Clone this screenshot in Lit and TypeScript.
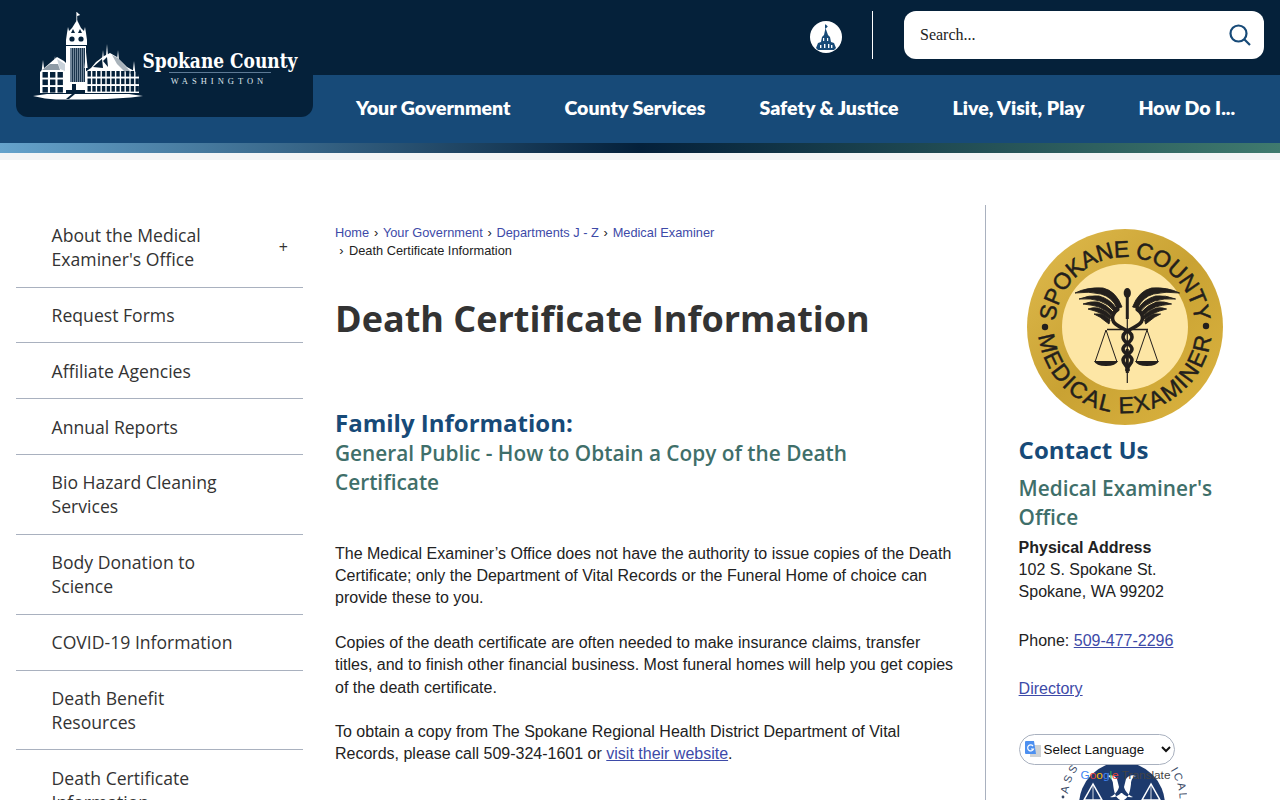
import { LitElement, css, html, svg } from 'lit';
import { customElement } from 'lit/decorators.js';

const NAV = ['Your Government', 'County Services', 'Safety & Justice', 'Live, Visit, Play', 'How Do I...'];

const SIDE = [
  { label: "About the Medical Examiner's Office", plus: true },
  { label: 'Request Forms' },
  { label: 'Affiliate Agencies' },
  { label: 'Annual Reports' },
  { label: 'Bio Hazard Cleaning Services' },
  { label: 'Body Donation to Science' },
  { label: 'COVID-19 Information' },
  { label: 'Death Benefit Resources' },
  { label: 'Death Certificate Information' },
];

// left wing of the caduceus, mirrored for the right one
const FEATHERS = [
  'M-3 -20Q-9 -36 -22 -39Q-38 -40 -50 -34Q-36 -36 -24 -33Q-13 -30 -8 -19z',
  'M-9 -19Q-15 -28 -26 -31Q-36 -32 -46 -28Q-34 -29 -25 -26Q-16 -23 -11 -16z',
  'M-12 -15Q-18 -22 -27 -25Q-34 -26 -42 -23Q-32 -22 -26 -20Q-19 -17 -14 -12z',
  'M-14 -11Q-20 -17 -27 -19Q-32 -20 -37 -18Q-29 -16 -25 -14Q-19 -11 -15 -8z',
  'M-15 -7Q-20 -12 -25 -13L-31 -13Q-24 -10 -20 -6L-16 -3z',
];

function windows(x0: number, y0: number, cols: number, rows: number, dx: number, dy: number, w: number, h: number) {
  const out = [];
  for (let c = 0; c < cols; c++) {
    for (let r = 0; r < rows; r++) {
      out.push(svg`<rect x=${x0 + c * dx} y=${y0 + r * dy} width=${w} height=${h} fill="#05213a" />`);
    }
  }
  return out;
}

@customElement('app-root')
export class AppRoot extends LitElement {
  static styles = css`
    :host {
      display: block;
      height: 800px;
      overflow: hidden;
      background: #fff;
      font-family: 'Liberation Sans', Arial, sans-serif;
      color: #222;
    }
    a {
      color: #3d4aa8;
    }
    .top {
      display: flex;
      align-items: center;
      justify-content: flex-end;
      height: 75px;
      background: #05213a;
      padding: 0 16px 5px 0;
      box-sizing: border-box;
    }
    .round {
      width: 32px;
      height: 32px;
      margin-top: 4px;
      border-radius: 50%;
      background: #fff;
      display: block;
    }
    .divider {
      width: 1px;
      height: 48px;
      background: #fff;
      margin: 0 31px 0 30px;
    }
    .search {
      width: 360px;
      height: 48px;
      background: #fff;
      border-radius: 12px;
      display: flex;
      align-items: center;
      padding: 0 12px 0 16px;
      box-sizing: border-box;
    }
    .search input {
      flex: 1;
      border: 0;
      outline: 0;
      min-width: 0;
      padding: 0;
      font: 16px 'Liberation Serif', 'Times New Roman', serif;
      color: #222;
    }
    .search input::placeholder {
      color: #222;
      opacity: 1;
    }
    .nav {
      display: flex;
      align-items: center;
      gap: 54px;
      height: 68px;
      background: #174a78;
      padding: 0 0 4px 356px;
      box-sizing: border-box;
    }
    .nav a {
      color: #fff;
      text-decoration: none;
      font: 800 19.5px Lato, 'Open Sans', sans-serif;
      white-space: nowrap;
    }
    .stripe {
      height: 10px;
      background: linear-gradient(90deg, #65a3cc 0%, #04203a 50%, #3f7a6e 100%);
    }
    .under {
      height: 7px;
      background: #f3f5f6;
    }
    .logo {
      position: absolute;
      left: 16px;
      top: 0;
      width: 297px;
      height: 117px;
      background: #05213a;
      border-radius: 0 0 12px 12px;
    }
    .logo svg {
      display: block;
    }
    .main {
      display: grid;
      grid-template-columns: 287px 620px 1fr;
      column-gap: 32px;
      padding: 45px 16px 0;
      align-items: start;
    }
    .side {
      list-style: none;
      margin: 0;
      padding: 2.7px 0 0;
      font: 17.6px/24px 'Open Sans', sans-serif;
      color: #333;
    }
    .side li {
      display: flex;
      justify-content: space-between;
      padding: 15.43px 12px 15.43px 35.6px;
      border-bottom: 1px solid #a9b1bf;
    }
    .side li:last-child {
      border-bottom: 0;
    }
    .side span:first-child {
      max-width: 196px;
    }
    .side .plus {
      font-size: 16px;
      align-self: center;
      margin-right: 3px;
    }
    .crumbs {
      font-size: 12.8px;
      line-height: 18px;
      margin-top: 19px;
    }
    .crumbs a {
      text-decoration: none;
    }
    .crumbs i {
      font-style: normal;
      margin: 0 1.2px;
    }
    .crumbs .last {
      display: block;
      padding-left: 3px;
    }
    .crumbs .last i {
      margin-right: 2px;
    }
    h1 {
      font: 700 36px/48px 'Open Sans', sans-serif;
      color: #333;
      margin: 35px 0 0;
    }
    h2 {
      font: 700 24px/32px 'Open Sans', sans-serif;
      color: #174a78;
      margin: 0;
    }
    .mid h2 {
      margin-top: 64px;
    }
    h3 {
      font: 600 20.8px/29px 'Open Sans', sans-serif;
      color: #3f6f6a;
      margin: 0;
    }
    p {
      font-size: 16px;
      line-height: 22.4px;
      margin: 0 0 22px;
    }
    .mid .first {
      margin-top: 45.6px;
    }
    .right {
      margin-left: -2px;
      border-left: 1px solid #a9b1bf;
      padding-left: 32.6px;
      height: 760px;
      font-size: 16px;
      line-height: 22.4px;
    }
    .seal {
      display: block;
      width: 200px;
      height: 200px;
      margin: 22px 0 0 6.4px;
    }
    .right h2 {
      margin-top: 7px;
    }
    .right h3 {
      margin-top: 8px;
      max-width: 225px;
    }
    .right p {
      margin: 4.6px 0 26px;
    }
    .right p + p {
      margin-top: 3px;
    }
    .lang {
      position: relative;
      margin-top: 33.4px;
    }
    .lang select {
      position: absolute;
      left: 0;
      top: 0;
      z-index: 2;
      width: 156px;
      height: 31px;
      border: 1px solid #a9b1bf;
      border-radius: 16px;
      background: #fff;
      font: 13.4px 'Liberation Sans', Arial, sans-serif;
      color: #111;
      padding-left: 20px;
      outline: 0;
    }
    .lang .g {
      position: absolute;
      left: 6px;
      top: 7px;
      z-index: 3;
      width: 16px;
      height: 17px;
    }
    .lang .bottom {
      position: absolute;
      left: 38px;
      top: 6px;
      width: 130px;
      height: 130px;
    }
    .lang .trans {
      position: absolute;
      left: 62px;
      top: 33px;
      z-index: 1;
      font-size: 11.8px;
      line-height: 16px;
      color: #444;
      white-space: nowrap;
    }
    .trans b {
      font-weight: 400;
    }
  `;

  renderLogo() {
    return svg`
      <svg width="297" height="117" viewBox="16 0 297 117">
        <g fill="#fff">
          <!-- flag and tower roof -->
          <path d="M76.4 12v9h.8v-9zM77.2 12.5l3 2.5-3 1z" />
          <path d="M77 20l4 8 3 3 1-4 1 6 1 7v5H66v-5l1-7 1-6 1 4 3-3z" />
          <path d="M71 33l2-4 2 4zM78 33l2-4 2 4z" fill="#05213a" />
          <circle cx="72" cy="39" r="2.6" fill="#05213a" />
          <circle cx="81" cy="39" r="2.6" fill="#05213a" />
          <!-- tower shaft -->
          <rect x="66" y="46" width="20" height="44" />
          <rect x="70" y="48" width="15" height="34" fill="#73879b" />
          ${windows(72, 48, 7, 1, 2, 0, 0.8, 34)}
          <!-- spires -->
          <path d="M43 60l1.5 12h-3zM55 56l1.5 12h-3zM86 52l1.6 16h-3.2zM103 50l1.4 14h-2.8zM107 44l1.5 18h-3zM118 50l1.6 16h-3.2zM134 61l1.6 14h-3.2z" />
          <!-- left wing -->
          <path d="M40 93V72l3-3 7-6 7-6 7 4 2 2v30z" />
          <path d="M57 59l8 5v7l-5-2z" fill="#c9d2da" />
          <path d="M42 70l8-6 8 0 2 6z" fill="#05213a" opacity=".45" />
          ${windows(42.5, 72, 3, 3, 7.5, 7.5, 5.4, 5.6)}
          <!-- right wing and big roof -->
          <path d="M85 93V72l6-4 5-6 8-6 6-3 7 4 10 10 9 5 3 3v18z" />
          <path d="M112 55l6 3 11 12 5 5-9-3-8-8z" fill="#05213a" opacity=".35" />
          <path d="M93 67l9-8 1 9zM103 61l4-4 1 10z" fill="#05213a" />
          ${windows(87.5, 71, 11, 3, 4.8, 7.5, 3.4, 5.6)}
          <!-- ground -->
          <path d="M33 96l14-2h82l14 2-12 1.5-24 1.5-24 .5H56l-11-1z" />
          <path d="M72 94l-6 5h3l6-5z" fill="#05213a" />
          <rect x="72" y="84" width="4" height="8" fill="#05213a" />
        </g>
        <text x="220" y="68" text-anchor="middle" fill="#fff" font-family="DejaVu Serif" font-weight="700" font-size="20" textLength="155" lengthAdjust="spacingAndGlyphs">Spokane County</text>
        <rect x="169" y="72" width="102" height="1" fill="#5d7a95" />
        <text x="219" y="84" text-anchor="middle" fill="#dfe6ec" font-family="Liberation Serif" font-size="8.5" letter-spacing="4">WASHINGTON</text>
      </svg>`;
  }

  renderSeal() {
    const ink = '#231f1c';
    const wing = FEATHERS.map((d) => svg`<path d=${d} fill=${ink} stroke=${ink} stroke-width=".9" />`);
    return svg`
      <svg class="seal" viewBox="-100 -100 200 200">
        <defs>
          <linearGradient id="gold" x1="0" y1="0" x2="1" y2="1">
            <stop offset="0" stop-color="#e0bb4e" />
            <stop offset="0.5" stop-color="#c9a233" />
            <stop offset="1" stop-color="#dcb440" />
          </linearGradient>
          <path id="arcTop" d="M-66.5 22A70 70 0 1 1 66.5 22" />
          <path id="arcBottom" d="M-87 -1A87 87 0 0 0 87 -1" />
        </defs>
        <circle r="98" fill="url(#gold)" />
        <circle r="63" fill="#fde6a5" />
        <text font-family="Liberation Sans" font-size="23" fill=${ink} stroke=${ink} stroke-width=".5" letter-spacing="-.5">
          <textPath href="#arcTop" startOffset="50%" text-anchor="middle">SPOKANE COUNTY</textPath>
        </text>
        <text font-family="Liberation Sans" font-size="23" fill=${ink} stroke=${ink} stroke-width=".5" letter-spacing="1.6">
          <textPath href="#arcBottom" startOffset="50%" text-anchor="middle">MEDICAL EXAMINER</textPath>
        </text>
        <circle cx="-80" cy="0" r="3.2" fill=${ink} />
        <circle cx="81" cy="-1" r="3.2" fill=${ink} />
        <g>${wing}</g>
        <g transform="translate(4.6 0) scale(-1 1)">${wing}</g>
        <g fill="none" stroke=${ink}>
          <path d="M2.3 -34V56" stroke-width="1.2" />
          <path d="M2.3 -34V-8M2.3 22V46" stroke-width="3" />
          <path d="M-18 2.5H23" stroke-width="1.6" />
          <path d="M-19 3L-30 35M-19 3L-8 35M22 3L11 35M22 3L33 35" stroke-width="1" />
          <path d="M-8 -17c-6 5-6 11 0 15 7 5 15 6 15 12s-9 7-9 12 9 6 9 11-6 6-5 11" stroke-width="3.6" />
          <path d="M13 -17c6 5 6 11 0 15 -7 5-15 6-15 12s9 7 9 12-9 6-9 11 6 6 5 11" stroke-width="3.6" />
        </g>
        <circle cx="-8" cy="-18" r="2.6" fill=${ink} />
        <circle cx="13" cy="-18" r="2.6" fill=${ink} />
        <ellipse cx="2.3" cy="-34" rx="3.6" ry="5" fill=${ink} />
        <path d="M-31 34H-7Q-9 39 -19 39T-31 34zM10 34H34Q32 39 22 39T10 34z" fill=${ink} />
      </svg>`;
  }

  renderBottomSeal() {
    const navy = '#1d3a6d';
    return svg`
      <svg class="bottom" viewBox="-65 -65 130 130">
        <defs><path id="arcAssoc" d="M-54 -11A56 56 0 1 1 52 20" /></defs>
        <text font-family="Liberation Sans" font-size="11" fill="#3a4a66" letter-spacing="3">
          <textPath href="#arcAssoc">ASSOC</textPath>
        </text>
        <text font-family="Liberation Sans" font-size="11" fill="#3a4a66" letter-spacing="2">
          <textPath href="#arcAssoc" startOffset="100%" text-anchor="end">ICAL • E</textPath>
        </text>
        <circle cx="-59" cy="-8" r="1.4" fill="#3a4a66" />
        <circle r="43" fill=${navy} />
        <g fill="none" stroke="#fff" stroke-width="1.5">
          <path d="M-29 -21L-38 -5H-20zM29 -21L20 -5H38z" />
          <path d="M-29 -21V-5M29 -21V-5" stroke-width=".8" />
        </g>
        <path d="M-15 -29c4 -2 8 0 10 3l2 8c-1 5-6 9-9 10 4 1 8-1 11-4l1 0c3 3 7 5 11 4-3-1-8-5-9-10l2-8c2-3 6-5 10-3-4 1-5 5-5 8-1 8-2 14-9 17-7-3-8-9-9-17 0-3-2-7-6-8z" fill="#fff" />
      </svg>`;
  }

  render() {
    return html`
      <div class="top">
        <svg class="round" viewBox="0 0 32 32">
          <path d="M15 3.5v4h.8l2-2-2-2z" fill="#174a78" />
          <path d="M15.5 7l2.5 7 2 2 1 5 3 1 2 5-2 2H8l-2-2 2-5 3-1 1-5 2-2z" fill="#174a78" />
          <path d="M13 17h1.2v3H13zM17 17h1.2v3H17zM10 24h1.4v3H10zM14 23h1.4v4H14zM18 23h1.4v4H18zM21 24h1.4v3H21z" fill="#fff" />
        </svg>
        <div class="divider"></div>
        <div class="search">
          <input placeholder="Search..." />
          <svg width="24" height="24" viewBox="0 0 24 24" fill="none" stroke="#174a78" stroke-width="2.2">
            <circle cx="10.5" cy="10.5" r="8" />
            <path d="M16.5 16.5L22 22" />
          </svg>
        </div>
      </div>
      <div class="nav">${NAV.map((n) => html`<a href="#">${n}</a>`)}</div>
      <div class="stripe"></div>
      <div class="under"></div>
      <div class="logo">${this.renderLogo()}</div>

      <div class="main">
        <ul class="side">
          ${SIDE.map(
            (s) => html`<li><span>${s.label}</span>${s.plus ? html`<span class="plus">+</span>` : ''}</li>`
          )}
        </ul>
        <div class="mid">
          <div class="crumbs">
            <a href="#">Home</a><i> › </i><a href="#">Your Government</a><i> › </i><a href="#">Departments J - Z</a><i> › </i><a href="#">Medical Examiner</a>
            <span class="last"><i>›</i> Death Certificate Information</span>
          </div>
          <h1>Death Certificate Information</h1>
          <h2>Family Information:</h2>
          <h3>General Public - How to Obtain a Copy of the Death Certificate</h3>
          <p class="first">
            The Medical Examiner’s Office does not have the authority to issue copies of the Death Certificate; only the
            Department of Vital Records or the Funeral Home of choice can provide these to you.
          </p>
          <p>
            Copies of the death certificate are often needed to make insurance claims, transfer titles, and to finish
            other financial business. Most funeral homes will help you get copies of the death certificate.
          </p>
          <p>
            To obtain a copy from The Spokane Regional Health District Department of Vital Records, please call
            509-324-1601 or <a href="#">visit their website</a>.
          </p>
        </div>
        <div class="right">
          ${this.renderSeal()}
          <h2>Contact Us</h2>
          <h3>Medical Examiner's Office</h3>
          <p>
            <strong>Physical Address</strong><br />
            102 S. Spokane St.<br />
            Spokane, WA 99202
          </p>
          <p>Phone: <a href="#">509-477-2296</a></p>
          <p><a href="#">Directory</a></p>
          <div class="lang">
            ${this.renderBottomSeal()}
            <div class="trans">
              <b style="color:#4285f4">G</b><b style="color:#ea4335">o</b><b style="color:#fbbc05">o</b><b style="color:#4285f4">g</b><b style="color:#34a853">l</b><b style="color:#ea4335">e</b> Translate
            </div>
            <select><option>Select Language</option></select>
            <svg class="g" viewBox="0 0 16 17">
              <rect x="5" y="4" width="11" height="12" fill="#cfd3d6" />
              <path d="M1 0h8l2 13H1a1 1 0 0 1-1-1V1a1 1 0 0 1 1-1z" fill="#4d90f0" />
              <path d="M8 5a3 3 0 1 0 .5 3H6" fill="none" stroke="#fff" stroke-width="1.2" />
            </svg>
          </div>
        </div>
      </div>
    `;
  }
}
